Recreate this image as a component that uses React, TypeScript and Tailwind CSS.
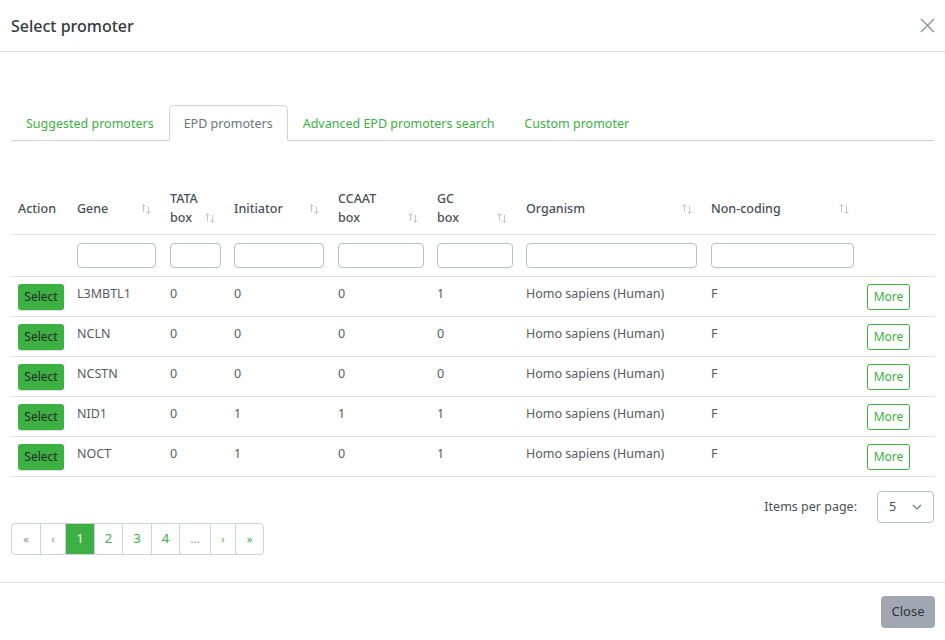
import { useState } from "react";

type Row = {
  gene: string;
  tata: string;
  initiator: string;
  ccaat: string;
  gc: string;
  organism: string;
  nonCoding: string;
};

const rows: Row[] = [
  { gene: "L3MBTL1", tata: "0", initiator: "0", ccaat: "0", gc: "1", organism: "Homo sapiens (Human)", nonCoding: "F" },
  { gene: "NCLN", tata: "0", initiator: "0", ccaat: "0", gc: "0", organism: "Homo sapiens (Human)", nonCoding: "F" },
  { gene: "NCSTN", tata: "0", initiator: "0", ccaat: "0", gc: "0", organism: "Homo sapiens (Human)", nonCoding: "F" },
  { gene: "NID1", tata: "0", initiator: "1", ccaat: "1", gc: "1", organism: "Homo sapiens (Human)", nonCoding: "F" },
  { gene: "NOCT", tata: "0", initiator: "1", ccaat: "0", gc: "1", organism: "Homo sapiens (Human)", nonCoding: "F" },
];

const tabs = ["Suggested promoters", "EPD promoters", "Advanced EPD promoters search", "Custom promoter"];

function SortIcon() {
  return (
    <svg width="12" height="12" viewBox="0 0 12 12" className="shrink-0 mb-[3px]" fill="none" stroke="#c3c8cf" strokeWidth="1">
      <path d="M3.5 9V1.5M1.5 3.5L3.5 1.5L5.5 3.5" />
      <path d="M8.5 3V10.5M6.5 8.5L8.5 10.5L10.5 8.5" />
    </svg>
  );
}

// header cell: text left, sort arrows pinned right on the last line
function Th({ lines, width, sortable = true }: { lines: string[]; width: string; sortable?: boolean }) {
  return (
    <th className={`${width} px-[7px] pr-[11px] py-[7px] text-left font-medium align-middle`}>
      <div className="flex items-end justify-between">
        <div className="leading-[19px]">
          {lines.map((l) => (
            <div key={l}>{l}</div>
          ))}
        </div>
        {sortable && <SortIcon />}
      </div>
    </th>
  );
}

function FilterInput({ w }: { w: string }) {
  return <input className={`${w} h-[25px] rounded-[4px] border border-[#b9c0ca] bg-white outline-none`} />;
}

export default function App() {
  const [tab, setTab] = useState(1);
  const [page, setPage] = useState(1);

  return (
    <div className="w-[945px] h-[640px] bg-white flex flex-col text-[#495057] font-['Noto_Sans',sans-serif]">
      {/* header */}
      <div className="h-[52px] shrink-0 flex items-center justify-between pl-[11px] pr-[10px] border-b border-[#dee2e6]">
        <h1 className="text-[16px] font-medium text-[#343a40]">Select promoter</h1>
        <button type="button" className="w-[16px] h-[16px] flex items-center justify-center">
          <svg width="15" height="15" viewBox="0 0 15 15" stroke="#8a9099" strokeWidth="1.3">
            <path d="M1 1L14 14M14 1L1 14" />
          </svg>
        </button>
      </div>

      {/* body */}
      <div className="flex-1 min-h-0 px-[11px] pt-[53px]">
        {/* tabs */}
        <div className="flex border-b border-[#cfd4da] text-[12.5px] h-[36px]">
          {tabs.map((t, i) => (
            <button
              key={t}
              type="button"
              onClick={() => setTab(i)}
              className={`px-[14px] pt-[3px] -mb-px border rounded-t-[5px] ${
                i === tab
                  ? "border-[#cfd4da] border-b-white bg-white text-[#6c757d]"
                  : "border-transparent text-[#3cb043]"
              }`}
            >
              {t}
            </button>
          ))}
        </div>

        {/* table */}
        <table className="mt-[41px] w-[924px] table-fixed border-collapse text-[12.5px]">
          <thead className="text-[#495057]">
            <tr className="border-b border-[#dee2e6] h-[52px]">
              <Th lines={["Action"]} width="w-[59px]" sortable={false} />
              <Th lines={["Gene"]} width="w-[93px]" />
              <Th lines={["TATA", "box"]} width="w-[64px]" />
              <Th lines={["Initiator"]} width="w-[104px]" />
              <Th lines={["CCAAT", "box"]} width="w-[99px]" />
              <Th lines={["GC", "box"]} width="w-[89px]" />
              <Th lines={["Organism"]} width="w-[185px]" />
              <Th lines={["Non-coding"]} width="w-[157px]" />
              <th className="w-[74px]" />
            </tr>
            <tr className="border-b border-[#dee2e6] h-[42px]">
              <td />
              <td className="px-[7px]"><FilterInput w="w-[79px]" /></td>
              <td className="px-[7px]"><FilterInput w="w-[51px]" /></td>
              <td className="px-[7px]"><FilterInput w="w-[90px]" /></td>
              <td className="px-[7px]"><FilterInput w="w-[86px]" /></td>
              <td className="px-[7px]"><FilterInput w="w-[76px]" /></td>
              <td className="px-[7px]"><FilterInput w="w-[171px]" /></td>
              <td className="px-[7px]"><FilterInput w="w-[143px]" /></td>
              <td />
            </tr>
          </thead>
          <tbody className="text-[#555b61]">
            {rows.map((r) => (
              <tr key={r.gene} className="border-b border-[#dee2e6] h-[40px]">
                <td className="px-[7px]">
                  <button type="button" className="h-[26px] w-[46px] rounded-[3px] bg-[#3cb043] text-[12px] text-[#1f2d1f] shadow-[0_1px_1px_rgba(0,0,0,0.15)]">
                    Select
                  </button>
                </td>
                <td className="px-[7px] align-top pt-[8px]">{r.gene}</td>
                <td className="px-[7px] align-top pt-[8px]">{r.tata}</td>
                <td className="px-[7px] align-top pt-[8px]">{r.initiator}</td>
                <td className="px-[7px] align-top pt-[8px]">{r.ccaat}</td>
                <td className="px-[7px] align-top pt-[8px]">{r.gc}</td>
                <td className="px-[7px] align-top pt-[8px]">{r.organism}</td>
                <td className="px-[7px] align-top pt-[8px]">{r.nonCoding}</td>
                <td className="px-[6px]">
                  <button type="button" className="h-[26px] w-[43px] rounded-[3px] border border-[#3cb043] bg-white text-[12px] text-[#3cb043]">
                    More
                  </button>
                </td>
              </tr>
            ))}
          </tbody>
        </table>

        {/* items per page */}
        <div className="mt-[14px] flex items-center justify-end gap-[20px] text-[12.5px]">
          <span className="text-[#495057]">Items per page:</span>
          <div className="w-[57px] h-[32px] rounded-[4px] border border-[#b9c0ca] flex items-center justify-between pl-[11px] pr-[11px] text-[#495057]">
            <span>5</span>
            <svg width="10" height="6" viewBox="0 0 10 6" fill="none" stroke="#6c757d" strokeWidth="1.2">
              <path d="M1 1L5 5L9 1" />
            </svg>
          </div>
        </div>

        {/* pagination */}
        <div className="inline-flex h-[32px] rounded-[4px] border border-[#cfd4da] overflow-hidden text-[13px]">
          {[
            { label: "«", w: "w-[28px]", cls: "text-[#8a9099] text-[11px]" },
            { label: "‹", w: "w-[25px]", cls: "text-[#8a9099] text-[11px]" },
            { label: "1", w: "w-[29px]", n: 1 },
            { label: "2", w: "w-[28px]", n: 2 },
            { label: "3", w: "w-[29px]", n: 3 },
            { label: "4", w: "w-[28px]", n: 4 },
            { label: "...", w: "w-[31px]", cls: "text-[#8a9099] text-[11px]" },
            { label: "›", w: "w-[25px]", cls: "text-[#3cb043] text-[11px]" },
            { label: "»", w: "w-[28px]", cls: "text-[#3cb043] text-[11px]" },
          ].map((p, i) => {
            const active = p.n === page;
            return (
              <button
                key={i}
                type="button"
                onClick={() => p.n && setPage(p.n)}
                className={`${p.w} h-full flex items-center justify-center ${i > 0 ? "border-l border-[#cfd4da]" : ""} ${
                  active ? "bg-[#3cb043] text-[#f1f8e6]" : p.cls ?? "text-[#3cb043]"
                }`}
              >
                {p.label}
              </button>
            );
          })}
        </div>
      </div>

      {/* footer */}
      <div className="h-[58px] shrink-0 border-t border-[#dee2e6] flex items-center justify-end pr-[10px]">
        <button type="button" className="h-[32px] w-[54px] rounded-[4px] bg-[#a0a7b3] text-[13px] text-[#2f353b]">
          Close
        </button>
      </div>
    </div>
  );
}
